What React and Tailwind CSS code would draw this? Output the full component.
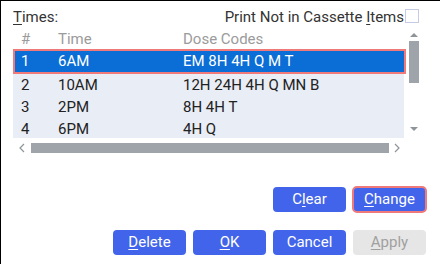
const ROWS = [
  { n: '1', time: '6AM', codes: 'EM 8H 4H Q M T' },
  { n: '2', time: '10AM', codes: '12H 24H 4H Q MN B' },
  { n: '3', time: '2PM', codes: '8H 4H T' },
  { n: '4', time: '6PM', codes: '4H Q' },
]

function Btn({ children, outlined, disabled }) {
  if (disabled) {
    return (
      <button className="w-[73px] h-[25px] rounded-[4px] bg-[#e6e6e6] text-[#a0a0a0] text-[15px] leading-none">
        {children}
      </button>
    )
  }
  return (
    <button
      className={`w-[73px] h-[25px] rounded-[4px] bg-[#4264ea] text-white text-[15px] leading-none ${
        outlined ? 'outline-2 outline-[#f07a7a] -outline-offset-1' : ''
      }`}
    >
      {children}
    </button>
  )
}

export default function App() {
  return (
    <div
      className="w-[440px] h-[264px] bg-white border-l border-t border-black flex flex-col pt-[8px] pl-[12px] pr-[14px] text-[#222]"
      style={{ fontFamily: 'Roboto, "Liberation Sans", sans-serif' }}
    >
      {/* top line */}
      <div className="flex justify-between items-center h-[16px] text-[15px] leading-[16px] text-[#333]">
        <span>
          <span className="underline underline-offset-2">T</span>imes:
        </span>
        <div className="flex items-center mr-[7px]">
          <span>
            Print Not in Cassette <span className="underline underline-offset-2">I</span>tems
          </span>
          <span className="w-[14px] h-[14px] border border-[#c5cbe6] bg-white ml-[1px] -mt-[2px]" />
        </div>
      </div>

      {/* table */}
      <div className="flex mt-[4px]">
        <div className="w-[393px] flex flex-col">
          <div className="h-[20px] flex items-center text-[15px] text-[#9b9b9b]">
            <span className="w-[45px] pl-[8px]">#</span>
            <span className="w-[125px]">Time</span>
            <span>Dose Codes</span>
          </div>
          <div className="h-[89px] overflow-hidden">
            {ROWS.map((r, i) =>
              i === 0 ? (
                <div
                  key={r.n}
                  className="h-[25px] flex items-center border-2 border-[#f07a7a] bg-[#0a6ed6] text-white text-[15px]"
                >
                  <span className="w-[43px] pl-[6px]">{r.n}</span>
                  <span className="w-[125px]">{r.time}</span>
                  <span>{r.codes}</span>
                </div>
              ) : (
                <div
                  key={r.n}
                  className="h-[22px] w-[391px] flex items-center bg-[#e9edf5] text-[15px] text-[#222]"
                >
                  <span className="w-[45px] pl-[8px]">{r.n}</span>
                  <span className="w-[125px]">{r.time}</span>
                  <span>{r.codes}</span>
                </div>
              )
            )}
          </div>
        </div>
        {/* vertical scrollbar */}
        <div className="w-[10px] ml-[3px] h-[109px] flex flex-col items-center">
          <svg width="10" height="8" viewBox="0 0 10 8" className="mt-[2px]">
            <path d="M1 6 L5 2 L9 6 Z" fill="#8f9499" />
          </svg>
          <div className="w-[10px] h-[42px] bg-[#9ea4a9] mt-[2px]" />
          <div className="flex-1" />
          <svg width="10" height="8" viewBox="0 0 10 8" className="mb-[5px]">
            <path d="M1 2 L5 6 L9 2 Z" fill="#8f9499" />
          </svg>
        </div>
      </div>

      {/* horizontal scrollbar */}
      <div className="w-[393px] h-[10px] mt-[5px] flex items-center">
        <svg width="10" height="10" viewBox="0 0 10 10" className="ml-[4px]">
          <path d="M7 1 L3 5 L7 9" fill="none" stroke="#8f9499" strokeWidth="1.2" />
        </svg>
        <div className="h-[10px] w-[358px] bg-[#9ea4a9] ml-[4px]" />
        <svg width="10" height="10" viewBox="0 0 10 10" className="ml-[3px]">
          <path d="M3 1 L7 5 L3 9" fill="none" stroke="#8f9499" strokeWidth="1.2" />
        </svg>
      </div>

      {/* clear / change */}
      <div className="flex justify-end gap-[7px] mt-[34px]">
        <Btn>
          C<span className="underline underline-offset-2">l</span>ear
        </Btn>
        <Btn outlined>
          <span className="underline underline-offset-2">C</span>hange
        </Btn>
      </div>

      {/* bottom buttons */}
      <div className="flex justify-end gap-[7px] mt-[18px]">
        <Btn>
          <span className="underline underline-offset-2">D</span>elete
        </Btn>
        <Btn>
          <span className="underline underline-offset-2">O</span>K
        </Btn>
        <Btn>Cancel</Btn>
        <Btn disabled>
          <span className="underline underline-offset-2">A</span>pply
        </Btn>
      </div>
    </div>
  )
}
